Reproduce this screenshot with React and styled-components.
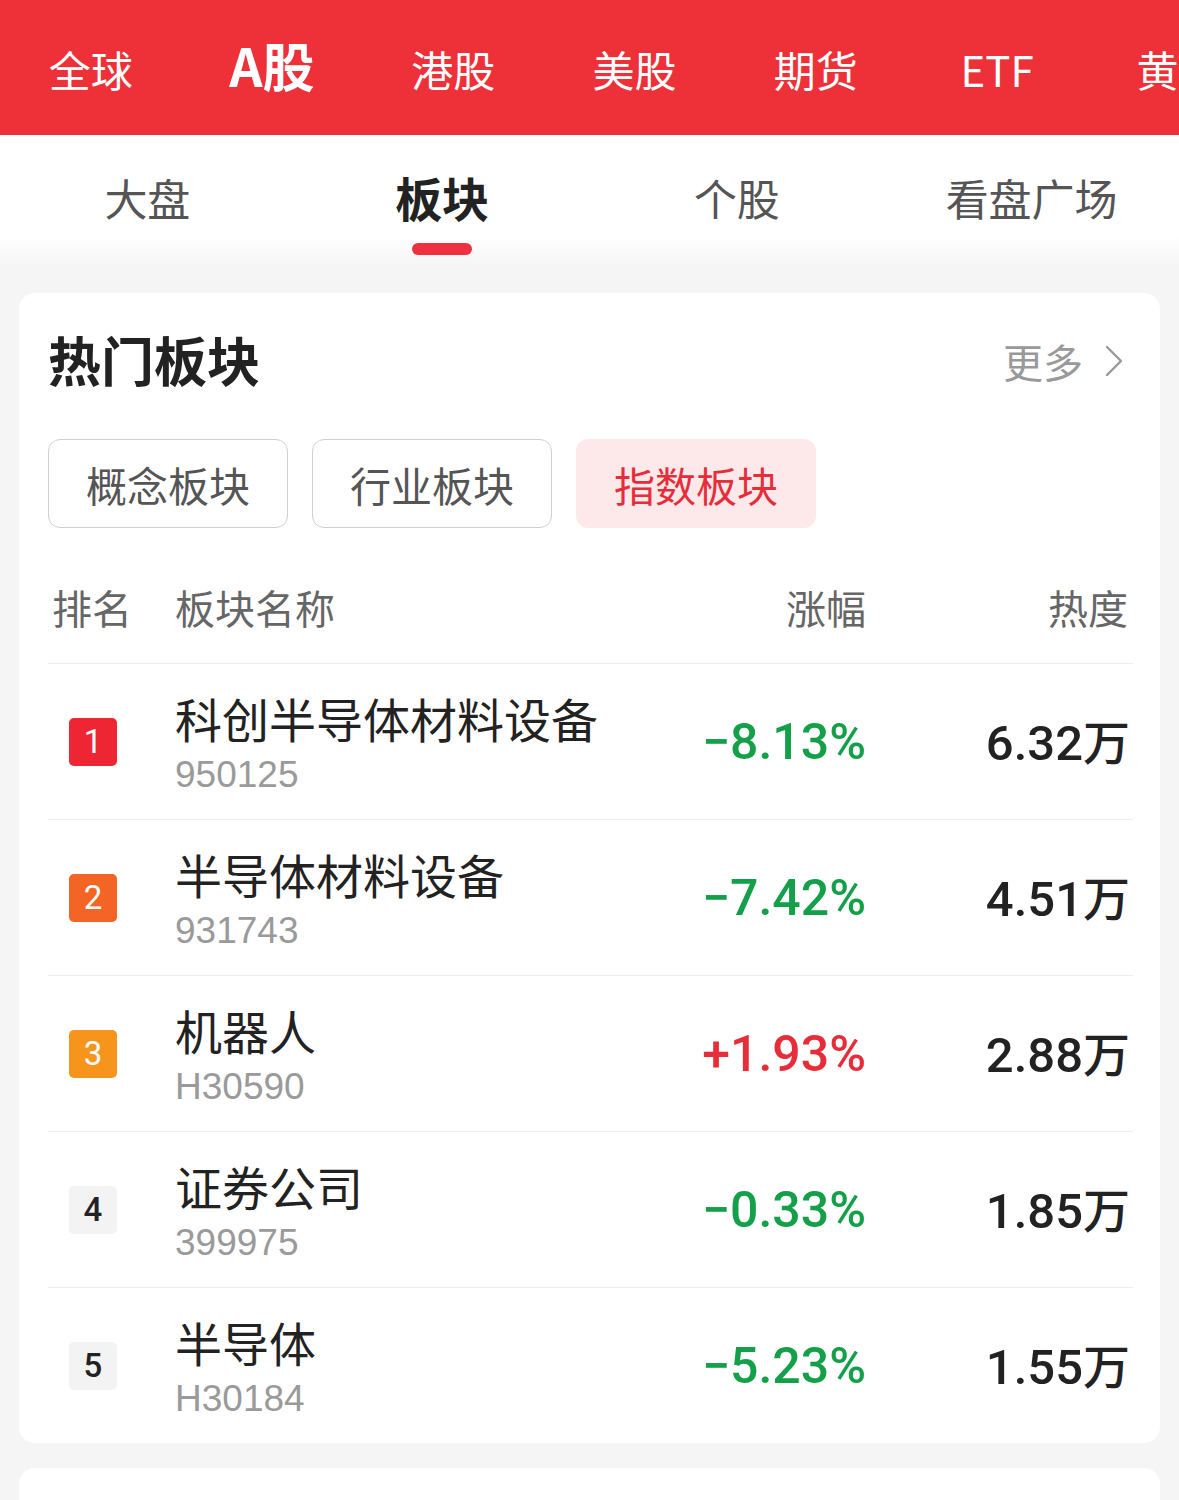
import React from "react";
import styled, { createGlobalStyle } from "styled-components";

const GlobalStyle = createGlobalStyle`
  body {
    margin: 0;
    background: #f5f5f5;
    font-family: "Noto Sans CJK SC", "Noto Sans", sans-serif;
  }
`;

const Page = styled.div`
  width: 1179px;
  height: 1500px;
  background: #f5f5f5;
  overflow: hidden;
`;

const MarketBar = styled.div`
  height: 135px;
  background: #ee3039;
  display: flex;
  align-items: center;
  white-space: nowrap;
  overflow: hidden;
`;

const MarketTab = styled.div`
  flex: 0 0 181.3px;
  text-align: center;
  color: #ffffff;
  font-size: ${({ $active }) => ($active ? "52px" : "42px")};
  font-weight: ${({ $active }) => ($active ? 700 : 400)};
  line-height: 60px;
  margin-top: ${({ $active }) => ($active ? "-6px" : "2px")};
`;

const SubBar = styled.div`
  display: grid;
  grid-template-columns: repeat(4, 1fr);
  height: 130px;
  background: linear-gradient(#ffffff 78%, #f5f5f5 100%);
`;

const SubTab = styled.div`
  display: flex;
  flex-direction: column;
  align-items: center;
  padding-top: 32px;
  font-size: ${({ $active }) => ($active ? "47px" : "43px")};
  font-weight: ${({ $active }) => ($active ? 700 : 400)};
  color: ${({ $active }) => ($active ? "#222222" : "#555555")};
  line-height: 60px;
`;

const Indicator = styled.div`
  width: 60px;
  height: 12px;
  margin-top: 16px;
  border-radius: 6px;
  background: ${({ $show }) => ($show ? "#ee3040" : "transparent")};
`;

const Content = styled.div`
  padding: 28px 19px 0 19px;
  display: flex;
  flex-direction: column;
  gap: 25px;
`;

const Card = styled.div`
  background: #ffffff;
  border-radius: 16px;
  padding: 0 27px 0 29px;
  min-height: ${({ $min }) => $min || 0}px;
`;

const TitleRow = styled.div`
  height: 136px;
  display: flex;
  align-items: center;
  justify-content: space-between;
`;

const Title = styled.div`
  font-size: 53px;
  font-weight: 700;
  color: #222222;
  margin-top: -4px;
`;

const More = styled.div`
  display: flex;
  align-items: center;
  gap: 22px;
  font-size: 40px;
  color: #999999;
  padding-right: 10px;
`;

const Chips = styled.div`
  display: flex;
  gap: 24px;
  margin-top: 10px;
`;

const Chip = styled.div`
  width: 240px;
  height: 89px;
  box-sizing: border-box;
  border-radius: 12px;
  display: flex;
  align-items: center;
  justify-content: center;
  font-size: 41px;
  color: ${({ $active }) => ($active ? "#e62e3a" : "#555555")};
  background: ${({ $active }) => ($active ? "#fde8ea" : "#ffffff")};
  border: 1.5px solid ${({ $active }) => ($active ? "#fde8ea" : "#cfcfcf")};
`;

const HeaderRow = styled.div`
  margin-top: 23px;
  height: 112px;
  display: flex;
  align-items: center;
  font-size: 40px;
  color: #666666;
`;

const RankHead = styled.div`
  width: 127px;
  padding-left: 4px;
  box-sizing: border-box;
`;

const NameHead = styled.div`
  flex: 1;
`;

const ChangeHead = styled.div`
  width: 300px;
  padding-right: 4px;
  box-sizing: border-box;
  text-align: right;
`;

const HeatHead = styled.div`
  width: 263px;
  padding-right: 5px;
  box-sizing: border-box;
  text-align: right;
`;

const Row = styled.div`
  height: 156px;
  display: flex;
  align-items: center;
  border-top: 1.5px solid #eeeeee;
  box-sizing: border-box;
`;

const RankCell = styled.div`
  width: 127px;
  padding-left: 21px;
  box-sizing: border-box;
`;

const RankBadge = styled.div`
  width: 48px;
  height: 48px;
  border-radius: 5px;
  display: flex;
  align-items: center;
  justify-content: center;
  font-family: "Roboto", "Noto Sans", sans-serif;
  font-size: 33px;
  font-weight: ${({ $top }) => ($top ? 400 : 500)};
  color: ${({ $top }) => ($top ? "#ffffff" : "#222222")};
  background: ${({ $bg }) => $bg};
`;

const NameCell = styled.div`
  flex: 1;
  min-width: 0;
  display: flex;
  flex-direction: column;
  white-space: nowrap;
  margin-top: -2px;
`;

const Name = styled.div`
  font-size: 47px;
  line-height: 68px;
  color: #222222;
`;

const Code = styled.div`
  font-family: "Liberation Sans", "Noto Sans", sans-serif;
  font-size: 37px;
  line-height: 46px;
  color: #9a9a9a;
`;

const Change = styled.div`
  width: 300px;
  padding-right: 4px;
  box-sizing: border-box;
  text-align: right;
  font-family: "Roboto", "Noto Sans", sans-serif;
  font-size: 50px;
  font-weight: 500;
  color: ${({ $up }) => ($up ? "#e62e3a" : "#14a049")};
`;

const Heat = styled.div`
  width: 263px;
  padding-right: 3px;
  box-sizing: border-box;
  text-align: right;
  font-family: "Roboto", "Noto Sans CJK SC", sans-serif;
  font-size: 49px;
  font-weight: 500;
  color: #222222;
  margin-top: -4px;
`;

const Unit = styled.span`
  font-family: "Noto Sans CJK SC", sans-serif;
  font-size: 47px;
  font-weight: 500;
`;

const markets = ["全球", "A股", "港股", "美股", "期货", "ETF", "黄金"];
const subTabs = ["大盘", "板块", "个股", "看盘广场"];
const chips = ["概念板块", "行业板块", "指数板块"];

const rows = [
  { rank: 1, name: "科创半导体材料设备", code: "950125", change: "−8.13%", heat: "6.32", bg: "#ee2533" },
  { rank: 2, name: "半导体材料设备", code: "931743", change: "−7.42%", heat: "4.51", bg: "#f46424" },
  { rank: 3, name: "机器人", code: "H30590", change: "+1.93%", heat: "2.88", bg: "#f7941c", up: true },
  { rank: 4, name: "证券公司", code: "399975", change: "−0.33%", heat: "1.85", bg: "#f3f3f3" },
  { rank: 5, name: "半导体", code: "H30184", change: "−5.23%", heat: "1.55", bg: "#f3f3f3" },
];

const Chevron = () => (
  <svg width="18" height="32" viewBox="0 0 18 32" fill="none">
    <polyline points="2,2 16,16 2,30" stroke="#999999" strokeWidth="2.4" strokeLinecap="round" strokeLinejoin="round" />
  </svg>
);

export default function App() {
  return (
    <Page>
      <GlobalStyle />
      <MarketBar>
        {markets.map((m) => (
          <MarketTab key={m} $active={m === "A股"}>
            {m}
          </MarketTab>
        ))}
      </MarketBar>
      <SubBar>
        {subTabs.map((t) => (
          <SubTab key={t} $active={t === "板块"}>
            {t}
            <Indicator $show={t === "板块"} />
          </SubTab>
        ))}
      </SubBar>
      <Content>
        <Card>
          <TitleRow>
            <Title>热门板块</Title>
            <More>
              更多
              <Chevron />
            </More>
          </TitleRow>
          <Chips>
            {chips.map((c) => (
              <Chip key={c} $active={c === "指数板块"}>
                {c}
              </Chip>
            ))}
          </Chips>
          <HeaderRow>
            <RankHead>排名</RankHead>
            <NameHead>板块名称</NameHead>
            <ChangeHead>涨幅</ChangeHead>
            <HeatHead>热度</HeatHead>
          </HeaderRow>
          {rows.map((r) => (
            <Row key={r.rank}>
              <RankCell>
                <RankBadge $bg={r.bg} $top={r.rank <= 3}>
                  {r.rank}
                </RankBadge>
              </RankCell>
              <NameCell>
                <Name>{r.name}</Name>
                <Code>{r.code}</Code>
              </NameCell>
              <Change $up={r.up}>{r.change}</Change>
              <Heat>
                {r.heat}
                <Unit>万</Unit>
              </Heat>
            </Row>
          ))}
        </Card>
        <Card $min={120} />
      </Content>
    </Page>
  );
}
